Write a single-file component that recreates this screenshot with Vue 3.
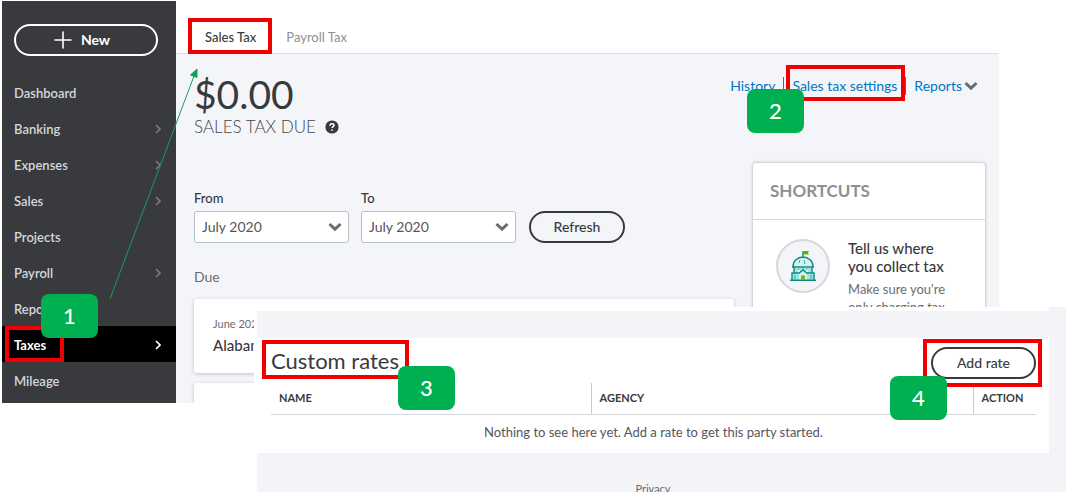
<script setup>
import { ref } from 'vue'

const navItems = [
  { label: 'Dashboard' },
  { label: 'Banking', more: true },
  { label: 'Expenses', more: true },
  { label: 'Sales', more: true },
  { label: 'Projects' },
  { label: 'Payroll', more: true },
  { label: 'Reports' },
  { label: 'Taxes', more: true, active: true },
  { label: 'Mileage' },
]
const from = ref('July 2020')
const to = ref('July 2020')
</script>

<template>
  <div class="board">
    <div class="app">
      <aside class="sidebar">
        <button class="new" type="button">
          <svg width="18" height="18" viewBox="0 0 18 18"><path d="M9 1v16M1 9h16" stroke="#fff" stroke-width="1.6" stroke-linecap="round" /></svg>
          New
        </button>
        <nav>
          <a v-for="item in navItems" :key="item.label" href="#" :class="{ active: item.active }">
            {{ item.label }}
            <svg v-if="item.more" width="6" height="10" viewBox="0 0 6 10"><path d="M1 1l4 4-4 4" fill="none" stroke="currentColor" stroke-width="1.7" /></svg>
          </a>
        </nav>
      </aside>

      <main>
        <nav class="tabs">
          <a href="#" class="current">Sales Tax</a>
          <a href="#">Payroll Tax</a>
        </nav>
        <div class="content">
          <section class="left">
            <h1>$0.00</h1>
            <p class="due-label">
              SALES TAX DUE
              <svg width="14" height="14" viewBox="0 0 14 14"><circle cx="7" cy="7" r="6.6" fill="#393a3d" /><path d="M5 5.7c0-1.3.9-2 2-2s2 .7 2 1.7c0 1.2-1.9 1.3-1.9 2.6M7.1 9.2v1.5" fill="none" stroke="#fff" stroke-width="1.5" /></svg>
            </p>
            <form class="filters" @submit.prevent>
              <div class="field">
                <label for="from">From</label>
                <div class="select">
                  <select id="from" v-model="from"><option>July 2020</option></select>
                  <svg width="14" height="10" viewBox="0 0 14 10"><path d="M1.5 2L7 7.2 12.5 2" fill="none" stroke="#6b6c72" stroke-width="3" /></svg>
                </div>
              </div>
              <div class="field">
                <label for="to">To</label>
                <div class="select">
                  <select id="to" v-model="to"><option>July 2020</option></select>
                  <svg width="14" height="10" viewBox="0 0 14 10"><path d="M1.5 2L7 7.2 12.5 2" fill="none" stroke="#6b6c72" stroke-width="3" /></svg>
                </div>
              </div>
              <button class="pill refresh" type="submit">Refresh</button>
            </form>
            <h2>Due</h2>
            <article class="card">
              <small>June 2020</small>
              <strong>Alabama</strong>
            </article>
            <article class="card rest"></article>
          </section>

          <section class="right">
            <div class="links">
              <a href="#">History</a>
              <a href="#">Sales tax settings</a>
              <a href="#">Reports<svg width="14" height="10" viewBox="0 0 14 10"><path d="M1.5 2L7 7.2 12.5 2" fill="none" stroke="#6b6c72" stroke-width="3" /></svg></a>
            </div>
            <div class="shortcuts">
              <h3>SHORTCUTS</h3>
              <div class="shortcut">
                <div class="badge">
                  <svg width="28" height="32" viewBox="0 0 28 32">
                    <path d="M5 16a9 9 0 0 1 18 0z" fill="#d5f4f0" />
                    <path d="M3 24h22v6H3zM5 18h18v6H5z" fill="#9be8e3" />
                    <path d="M9 17h2v6H9zM17 17h2v6h-2z" fill="#f4f5f8" />
                    <path d="M10 30v-5l4-4 4 4v5z" fill="#d5f4f0" />
                    <path d="M4 16.500a10 9.500 0 0 1 20 0M3 17h22M5 17v6h5M23 17v6h-5M3 30v-7h7l4-3 4 3h7v7M1 30.300h26M14 8V1" fill="none" stroke="#108985" stroke-width="1.400" />
                    <path d="M11 10l-1 3M15 10l1 4M10 20v-2M14 20v-2M18 20v-2M6 25v4M22 25v4" fill="none" stroke="#20b2a6" />
                    <path d="M14 1h6l-1 1.700 1 1.800h-6z" fill="#53b700" />
                    <path d="M12 30v-3a2 2 0 0 1 4 0v3z" fill="#7cb518" />
                  </svg>
                </div>
                <div>
                  <h4>Tell us where you collect tax</h4>
                  <p>Make sure you're only charging tax</p>
                </div>
              </div>
            </div>
          </section>
        </div>
      </main>
    </div>

    <section class="panel">
      <div class="rates">
        <header>
          <h2>Custom rates</h2>
          <button class="pill" type="button">Add rate</button>
        </header>
        <table>
          <colgroup><col class="c-name"><col><col class="c-action"></colgroup>
          <thead><tr><th>NAME</th><th>AGENCY</th><th>ACTION</th></tr></thead>
          <tbody><tr><td colspan="3">Nothing to see here yet. Add a rate to get this party started.</td></tr></tbody>
        </table>
      </div>
      <footer><a href="#">Privacy</a></footer>
    </section>

    <svg class="arrow" width="96" height="236" viewBox="0 0 96 236">
      <path d="M4 232L88 9" stroke="#12a05a" stroke-width="1" />
      <path d="M91 2l-6.500 6 6.500 2.500z" fill="#12a05a" stroke="#12a05a" />
    </svg>
    <div class="frame f-tab"></div>
    <div class="frame f-taxes"></div>
    <div class="frame f-settings"></div>
    <div class="frame f-rates"></div>
    <div class="frame f-add"></div>
    <div class="step s1">1</div>
    <div class="step s2">2</div>
    <div class="step s3">3</div>
    <div class="step s4">4</div>
  </div>
</template>

<style>
body { background: #fff; }
</style>

<style scoped>
* { box-sizing: border-box; margin: 0; }
.board {
  position: relative; min-height: 100vh; overflow: hidden;
  font-family: Lato, "Open Sans", sans-serif; font-size: 14px; line-height: 18px; color: #393a3d;
}
a { text-decoration: none; color: inherit; }
button, select { font: inherit; color: inherit; }
.app { display: flex; margin: 1px 67px 0 2px; }
.sidebar { width: 174px; flex: none; background: #393a3d; padding: 23px 0 5px; }
.new {
  display: flex; align-items: center; justify-content: center; gap: 9px;
  width: 144px; height: 32px; margin: 0 12px 18px; padding: 0 8px 0 0;
  border: 2px solid #fff; border-radius: 16px; background: none; color: #fff; font-weight: 700;
}
.sidebar nav a {
  display: flex; align-items: center; justify-content: space-between; height: 36px;
  padding: 2px 15px 0 12px; font-size: 13px; font-weight: 600; color: #d4d7dc;
}
.sidebar nav svg { color: #77797f; }
.sidebar nav a.active { background: #000; color: #fff; font-weight: 700; }
.sidebar nav a.active svg { color: #fff; }

main { flex: 1; display: flex; flex-direction: column; background: #f4f5f8; }
.tabs {
  display: flex; align-items: flex-start; gap: 30px; height: 53px; padding: 27px 29px 0;
  font-size: 13px; background: #fff; border-bottom: 1px solid #dcdfe4; color: #8d9096;
}
.tabs .current { color: #393a3d; font-weight: 500; }
.content { flex: 1; display: grid; grid-template-columns: 1fr 234px; gap: 18px; padding: 0 13px 0 18px; }
.left { display: flex; flex-direction: column; padding-top: 18px; }
h1 { font-size: 39px; line-height: 44px; font-weight: 400; }
.due-label {
  display: flex; align-items: center; gap: 9px; margin: 1px 0 52px;
  font-size: 17px; line-height: 20px; font-weight: 300; color: #44454a;
}
.filters { display: flex; align-items: flex-end; gap: 12px; }
.field label { display: block; margin-bottom: 4px; font-size: 13px; font-weight: 500; }
.select { position: relative; width: 155px; }
.select select {
  display: block; width: 100%; height: 32px; padding: 0 7px; appearance: none;
  border: 1px solid #babec5; border-radius: 3px; background: #fff; color: #55565b;
}
.select svg { position: absolute; right: 7px; top: 11px; pointer-events: none; }
.pill { height: 32px; border: 2px solid #393a3d; border-radius: 16px; background: #fff; font-weight: 500; }
.refresh { width: 96px; margin-left: 1px; background: transparent; }
.left h2 { margin: 25px 0 13px; font-size: 14px; font-weight: 400; color: #6b6c72; }
.card {
  display: flex; flex-direction: column; height: 74px; margin-bottom: 10px; padding: 16px 19px;
  gap: 3px; border-radius: 3px; background: #fff; box-shadow: 0 1px 4px rgba(0, 0, 0, .2);
}
.card small { font-size: 11px; color: #6b6c72; }
.card strong { font-size: 15px; font-weight: 500; }
.card.rest { flex: 1; height: auto; min-height: 20px; margin: 0; padding: 0; border-radius: 3px 3px 0 0; clip-path: inset(-4px -4px 0 -4px); }

.right { height: 300px; }
.links { display: flex; justify-content: flex-end; align-items: center; height: 20px; margin: 22px 8px 66px -40px; color: #0077c5; white-space: nowrap; }
.links a { padding: 0 8px; }
.links a + a { border-left: 1px solid #2f8a1d; }
.links a:last-child { display: flex; align-items: center; gap: 2px; padding-right: 0; }
.shortcuts { border: 1px solid #d4d7dc; border-radius: 4px; background: #fff; box-shadow: 0 0 3px rgba(0, 0, 0, .15); }
h3 { padding: 18px 17px; font-size: 17px; line-height: 20px; font-weight: 700; color: #8d9096; border-bottom: 1px solid #d4d7dc; }
.shortcut { display: grid; grid-template-columns: 54px 1fr; gap: 18px; padding: 19px 23px; }
.badge { display: grid; place-items: center; width: 54px; height: 54px; border: 2px solid #d4d7dc; border-radius: 50%; background: #f4f5f8; }
h4 { width: 110px; font-size: 15px; font-weight: 500; }
.shortcut p { width: 110px; margin-top: 5px; font-size: 13px; color: #6b6c72; }

.panel { position: absolute; left: 254px; top: 307px; right: 0; bottom: 0; border-left: 3px solid #fff; background: #f2f4f7; }
.rates { height: 115px; margin: 31px 17px 0 0; padding: 5px 13px 0 14px; background: #fff; }
.rates::before { content: ""; position: absolute; left: 0; top: 0; right: 17px; height: 4px; background: #fff; }
.rates header { display: flex; justify-content: space-between; height: 36px; margin-top: 4px; }
.rates h2 { font-size: 22px; line-height: 28px; font-weight: 400; }
.rates .pill { width: 105px; }
table { width: 100%; table-layout: fixed; border-collapse: collapse; }
.c-name { width: 320px; }
.c-action { width: 63px; }
th { height: 31px; padding: 0 8px; text-align: left; font-size: 11px; font-weight: 700; border-bottom: 1px solid #d4d7dc; }
th + th { border-left: 1px solid #b8d0da; }
td { height: 35px; padding: 0; text-align: center; font-size: 13px; color: #55565b; }
footer { margin: 27px 17px 0 0; text-align: center; font-size: 11px; color: #6b6c72; }

.arrow { position: absolute; left: 106px; top: 67px; }
.frame { position: absolute; border: 4px solid #f00000; }
.f-tab { left: 188px; top: 18px; width: 84px; height: 36px; }
.f-taxes { left: 5px; top: 326px; width: 59px; height: 36px; }
.f-settings { right: 161px; top: 65px; width: 119px; height: 36px; }
.f-rates { left: 262px; top: 340px; width: 147px; height: 39px; }
.f-add { right: 24px; top: 339px; width: 119px; height: 48px; }
.step {
  position: absolute; display: grid; place-items: center; width: 57px; height: 44px;
  border-radius: 8px; background: #00b050; color: #fff; font-size: 22px; font-weight: 500;
}
.s1 { left: 41px; top: 294px; }
.s2 { right: 262px; top: 89px; }
.s3 { left: 398px; top: 366px; }
.s4 { right: 119px; top: 376px; }
</style>
